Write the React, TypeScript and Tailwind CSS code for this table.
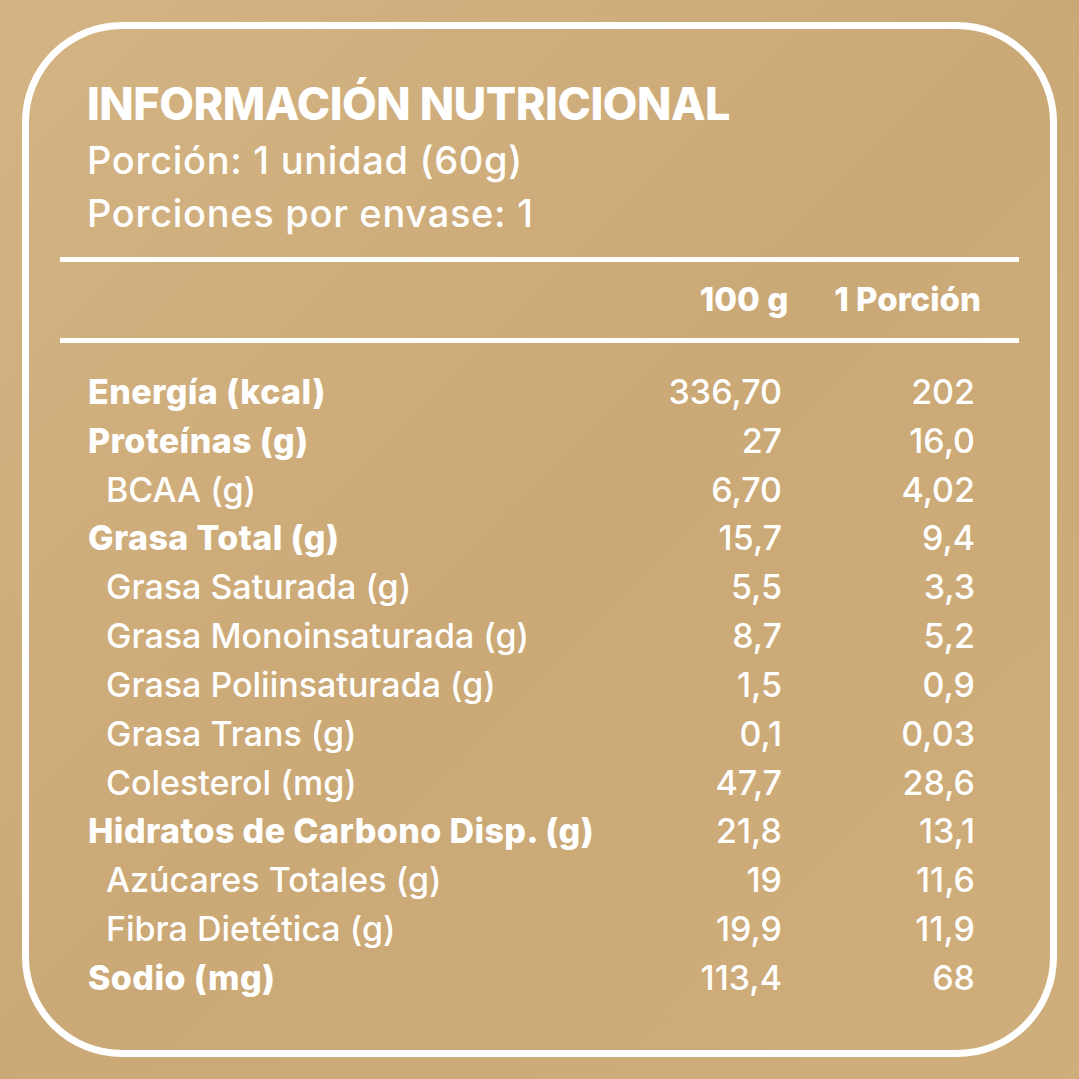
const rows: { label: string; a: string; b: string; main?: boolean }[] = [
  { label: 'Energía (kcal)', a: '336,70', b: '202', main: true },
  { label: 'Proteínas (g)', a: '27', b: '16,0', main: true },
  { label: 'BCAA (g)', a: '6,70', b: '4,02' },
  { label: 'Grasa Total (g)', a: '15,7', b: '9,4', main: true },
  { label: 'Grasa Saturada (g)', a: '5,5', b: '3,3' },
  { label: 'Grasa Monoinsaturada (g)', a: '8,7', b: '5,2' },
  { label: 'Grasa Poliinsaturada (g)', a: '1,5', b: '0,9' },
  { label: 'Grasa Trans (g)', a: '0,1', b: '0,03' },
  { label: 'Colesterol (mg)', a: '47,7', b: '28,6' },
  { label: 'Hidratos de Carbono Disp. (g)', a: '21,8', b: '13,1', main: true },
  { label: 'Azúcares Totales (g)', a: '19', b: '11,6' },
  { label: 'Fibra Dietética (g)', a: '19,9', b: '11,9' },
  { label: 'Sodio (mg)', a: '113,4', b: '68', main: true },
];

export default function App() {
  return (
    <div
      className="w-[1079px] h-[1079px] p-[22px] bg-gradient-to-br from-[#d4b483] via-[#cba977] to-[#cfae7c] text-white"
      style={{ fontFamily: 'Inter, "Open Sans", sans-serif' }}
    >
      <div className="h-full rounded-[100px] border-[7px] border-white px-[31px] pt-[48px]">
        <div className="pl-[27px]">
          <h1 className="text-[45px] leading-[54px] font-extrabold tracking-[-0.5px]">INFORMACIÓN NUTRICIONAL</h1>
          <p className="mt-[3px] text-[38px] leading-[53px] font-medium tracking-[0.7px]">Porción: 1 unidad (60g)</p>
          <p className="text-[38px] leading-[53px] font-medium tracking-[0.7px]">Porciones por envase: 1</p>
        </div>

        <div className="mt-[17px] h-[5px] bg-white" />
        <div className="flex h-[76px] items-center justify-end pr-[38px] text-[33px] font-extrabold">
          <span>100 g</span>
          <span className="ml-[46px]">1 Porción</span>
        </div>
        <div className="h-[5px] bg-white" />

        <div className="mt-[24px] pl-[28px]">
          {rows.map((r) => (
            <div key={r.label} className="flex h-[48.83px] items-center text-[34px] font-medium">
              <span className={r.main ? 'flex-1 font-extrabold tracking-[0.4px]' : 'flex-1 pl-[18px]'}>{r.label}</span>
              <span className="w-[150px] text-right">{r.a}</span>
              <span className="ml-[43px] mr-[44px] w-[150px] text-right">{r.b}</span>
            </div>
          ))}
        </div>
      </div>
    </div>
  );
}
